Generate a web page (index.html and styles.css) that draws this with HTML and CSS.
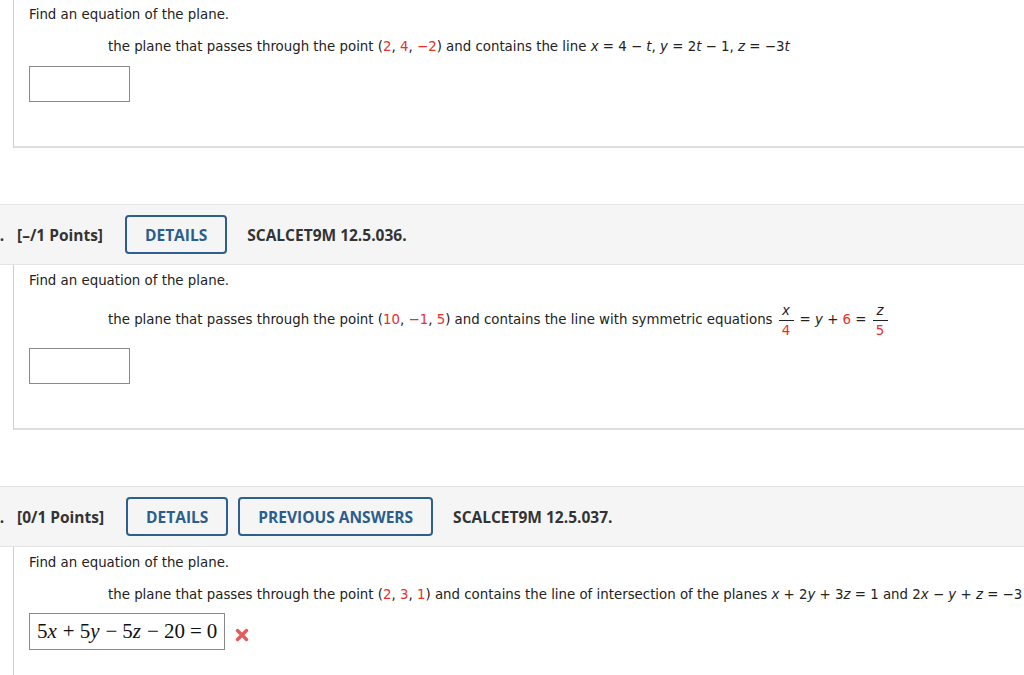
FILE: index.html
```html
<!DOCTYPE html>
<html>
<head>
<meta charset="utf-8">
<link rel="stylesheet" href="styles.css">
</head>
<body>
<div class="page">
  <section class="card">
    <p class="prompt">Find an equation of the plane.</p>
    <p class="question">the plane that passes through the point (<span class="r">2</span>, <span class="r">4</span>, <span class="r">−2</span>) and contains the line <i>x</i> = 4 − <i>t</i>, <i>y</i> = 2<i>t</i> − 1, <i>z</i> = −3<i>t</i></p>
    <div class="input"></div>
  </section>

  <header class="qhead">
    <span class="num">1.</span>
    <span class="points">[–/1 Points]</span>
    <span class="btn">DETAILS</span>
    <span class="code">SCALCET9M 12.5.036.</span>
  </header>
  <section class="card">
    <p class="prompt">Find an equation of the plane.</p>
    <div class="question qfrac">
      <span>the plane that passes through the point (<span class="r">10</span>, <span class="r">−1</span>, <span class="r">5</span>) and contains the line with symmetric equations</span>
      <span class="frac"><span class="top"><i>x</i></span><span class="bot r">4</span></span>
      <span>= <i>y</i> + <span class="r">6</span> =</span>
      <span class="frac"><span class="top"><i>z</i></span><span class="bot r">5</span></span>
    </div>
    <div class="input"></div>
  </section>

  <header class="qhead">
    <span class="num">2.</span>
    <span class="points">[0/1 Points]</span>
    <span class="btn">DETAILS</span>
    <span class="btn">PREVIOUS ANSWERS</span>
    <span class="code">SCALCET9M 12.5.037.</span>
  </header>
  <section class="card last">
    <p class="prompt">Find an equation of the plane.</p>
    <p class="question">the plane that passes through the point (<span class="r">2</span>, <span class="r">3</span>, <span class="r">1</span>) and contains the line of intersection of the planes <i>x</i> + 2<i>y</i> + 3<i>z</i> = 1 and 2<i>x</i> − <i>y</i> + <i>z</i> = −3</p>
    <div class="answer-row">
      <div class="answer">5<i>x</i><span class="op">+</span>5<i>y</i><span class="op">−</span>5<i>z</i><span class="op">−</span>20<span class="op">=</span>0</div>
      <svg class="wrong" width="14" height="14" viewBox="0 0 14 14" aria-hidden="true">
        <path d="M2.5 2.5 L11.5 11.5 M11.5 2.5 L2.5 11.5" stroke="#e35b5b" stroke-width="3.4" stroke-linecap="round"/>
      </svg>
    </div>
  </section>
</div>
</body>
</html>
```

FILE: styles.css
```css
html, body {
  margin: 0;
  padding: 0;
  background: #fff;
  overflow: hidden;
}
.page {
  width: 1024px;
  height: 675px;
  overflow: hidden;
  font-family: "DejaVu Sans", Verdana, sans-serif;
  font-size: 13.35px;
  color: #222;
}
.card {
  margin-left: 13px;
  border-left: 1px solid #cfcfcf;
  border-bottom: 2px solid #dedede;
  padding: 7px 0 44px 15px;
}
.card + .qhead { margin-top: 56px; }
.qhead + .card { padding-top: 8px; }
.card.last { border-bottom: none; padding-bottom: 40px; }
.prompt {
  margin: 0;
  line-height: 16px;
  white-space: nowrap;
}
.question {
  margin: 16px 0 0 79px;
  line-height: 16px;
  white-space: nowrap;
}
.question i { font-style: italic; }
.r { color: #e8302c; }
.qfrac {
  display: flex;
  align-items: center;
  gap: 4px;
  height: 34px;
  margin-top: 14px;
}
.frac {
  display: inline-flex;
  flex-direction: column;
  align-items: center;
  line-height: 15px;
  padding: 0 2px;
}
.frac .top {
  border-bottom: 1px solid #222;
  padding: 0 2px 2px;
  min-width: 11px;
  text-align: center;
}
.frac .bot { padding-top: 2px; }
.input {
  margin-top: 11px;
  width: 99px;
  height: 34px;
  border: 1px solid #8a8a8a;
}
.qhead {
  display: flex;
  align-items: center;
  height: 59px;
  border-top: 1px solid #e4e4e4;
  border-bottom: 1px solid #e4e4e4;
  background: #f5f5f5;
  font-family: "Open Sans", "Liberation Sans", sans-serif;
  font-weight: 700;
  font-size: 15.5px;
  color: #333;
  white-space: nowrap;
}
.num {
  margin-left: -9px;
  width: 26px;
}
.points { margin-right: 22px; }
.btn {
  box-sizing: border-box;
  height: 39px;
  display: inline-flex;
  align-items: center;
  padding: 0 18px;
  border: 2px solid #2e5f8f;
  border-radius: 4px;
  color: #2b5d8d;
  margin-right: 10px;
  background: transparent;
}
.code { margin-left: 10px; }
.answer-row {
  display: flex;
  align-items: center;
  margin-top: 10px;
  gap: 10px;
}
.answer {
  box-sizing: border-box;
  height: 37px;
  padding: 0 7px;
  display: flex;
  align-items: center;
  border: 1px solid #8a8a8a;
  font-family: "Liberation Serif", "DejaVu Serif", serif;
  font-size: 21px;
  color: #111;
  white-space: nowrap;
}
.answer i { margin: 0 1px 0 0; }
.answer .op { margin: 0 5px; }
.wrong { margin-top: 6px; }
```
